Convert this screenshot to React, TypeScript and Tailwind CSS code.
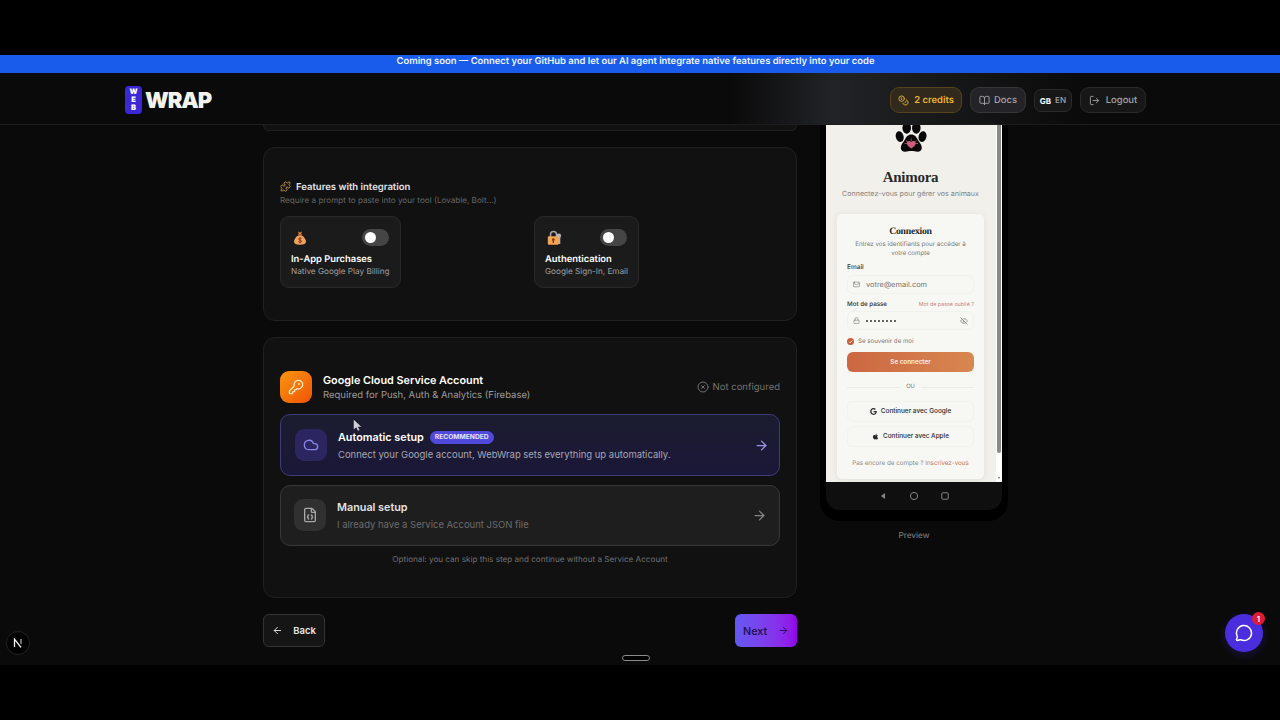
import React, { useState } from 'react';
import {
  ArrowLeft,
  ArrowRight,
  BookOpen,
  CircleX,
  Cloud,
  Coins,
  EyeOff,
  FileJson,
  KeyRound,
  Lock,
  LogOut,
  Mail,
  MessageCircle,
  Puzzle,
} from 'lucide-react';
import { FaApple, FaGoogle } from 'react-icons/fa';

interface FeatureCardProps {
  icon: React.ReactNode;
  title: string;
  description: string;
}

interface SetupOptionProps {
  icon: React.ReactNode;
  title: string;
  description: string;
  recommended?: boolean;
}

const MoneyBag = () => (
  <svg viewBox="0 0 16 16" className="w-4 h-4">
    <path d="M6 1.5 8 2.4l2-.9-.8 2.6H6.8z" fill="#e8833a" />
    <path d="M6.6 5.2C3.8 6.8 2 9.4 2 11.6 2 14 4 14.8 8 14.8s6-.8 6-3.200c0-2.200-1.800-4.800-4.600-6.400z" fill="#f0a35e" />
    <rect x="6" y="4" width="4" height="1.500" rx=".7" fill="#c4602a" />
    <path d="M9.700 8.500c-.8-.8-3.200-.7-3.200.6 0 1.400 3.200.8 3.200 2.200 0 1.300-2.500 1.400-3.400.5M8 7.300v6" stroke="#8a3b16" strokeWidth="1" fill="none" />
  </svg>
);

const LockWithKey = () => (
  <svg viewBox="0 0 16 16" className="w-4 h-4">
    <path d="M4.500 7V4.600a3 3 0 0 1 6 0V7" stroke="#a9a4a4" strokeWidth="1.500" fill="none" />
    <circle cx="12.800" cy="5.800" r="2.300" fill="#b9b4ba" />
    <path d="M11.800 7h2.500v7h-2.500z" fill="#c9a79a" />
    <rect x="1.800" y="6.200" width="10.800" height="8.600" rx="1.200" fill="#f2a455" />
    <circle cx="7.300" cy="9.600" r="1.300" fill="#7a2f14" />
    <path d="M6.700 10h1.300v3H6.700z" fill="#7a2f14" />
  </svg>
);

const Paw = () => (
  <svg viewBox="0 0 32 32" className="w-8 h-8">
    <g fill="#080808">
      <ellipse cx="11.700" cy="7" rx="4.300" ry="5.800" />
      <ellipse cx="21.300" cy="7" rx="4.300" ry="5.800" />
      <ellipse cx="4.700" cy="15.600" rx="3.900" ry="5.400" transform="rotate(-14 4.700 15.600)" />
      <ellipse cx="27.500" cy="15.600" rx="3.900" ry="5.400" transform="rotate(14 27.500 15.600)" />
      <path d="M16.300 13.500c-3.500 0-5 2.300-6.500 5.300-1.500 2.700-4 4.700-4 8 0 2.500 1.900 3.900 4.200 3.900 2.500 0 4-.6 6.300-.6s3.800.6 6.300.6c2.300 0 4.200-1.400 4.200-3.900 0-3.300-2.500-5.300-4-8-1.500-3-3-5.300-6.500-5.300z" />
    </g>
    <path d="M16.300 27.500c-2.600-1.700-4.400-3.400-4.400-5.300 0-2.400 3.200-3 4.400-.9 1.200-2.100 4.400-1.500 4.400.9 0 1.900-1.800 3.600-4.400 5.300z" fill="#cc5d7d" />
    <path d="M11 19.500l2.500 2M21.600 19.500l-2.500 2M16.300 17.500v3M9.500 22.500h3M23 22.500h-3" stroke="#cc5d7d" strokeWidth=".7" />
  </svg>
);

const FeatureCard: React.FC<FeatureCardProps> = ({ icon, title, description }) => {
  const [enabled, setEnabled] = useState(false);

  return (
    <div className="w-fit h-[72px] rounded-[9px] border border-[#292929] bg-[#1b1b1b] px-2.5 pt-3">
      <div className="flex items-center justify-between h-[17px] pl-[1px]">
        {icon}
        <button
          onClick={() => setEnabled(!enabled)}
          className={`flex items-center w-[27px] h-[17px] -ml-px mr-px rounded-full px-[3px] ${enabled ? 'justify-end bg-indigo-500' : 'bg-[#454545]'}`}
        >
          <span className="w-[11px] h-[11px] rounded-full bg-white" />
        </button>
      </div>
      <h4 className="mt-[7px] text-[9.400px] leading-[13px] font-semibold text-white whitespace-nowrap">{title}</h4>
      <p className="-mt-px text-[8.180px] leading-3 text-[#a0a0a0] whitespace-nowrap">{description}</p>
    </div>
  );
};

const SetupOption: React.FC<SetupOptionProps> = ({ icon, title, description, recommended = false }) => (
  <button
    className={`flex items-center w-full rounded-[10px] text-left ${
      recommended
        ? 'h-[62px] border-[1.500px] border-[#3f3a78] bg-linear-to-b from-[#1b1c2f] to-[#1b1738] pl-3.5 pr-2.5'
        : 'h-[61px] border border-[#373737] bg-[#1e1e1e] pl-[13px] pr-3 pb-px'
    }`}
  >
    <span
      className={`flex items-center justify-center w-8 h-8 rounded-[9px] shrink-0 ${
        recommended ? 'bg-[#2b265f] text-[#8985e8]' : 'bg-[#303030] text-[#a6a6a6]'
      }`}
    >
      {icon}
    </span>
    <span className="flex flex-col flex-1 ml-[11px] pt-0.5">
      <span className="flex items-center h-4">
        <span className={`text-[10.800px] leading-4 font-semibold ${recommended ? 'text-white' : 'text-[#e2e2e2]'}`}>{title}</span>
        {recommended && (
          <span className="flex items-center h-[13px] -mt-px ml-1.5 px-[5px] rounded-full bg-[#5148dc] text-[6.700px] font-bold text-[#e6e3ff]">
            RECOMMENDED
          </span>
        )}
      </span>
      <span className={`mt-0.5 text-[9.480px] leading-[14px] ${recommended ? 'text-[#a7a7b4]' : 'text-[#6c6c6c]'}`}>{description}</span>
    </span>
    <ArrowRight className={`w-[15px] h-[15px] ${recommended ? 'text-[#9a94e6]' : 'text-[#858585]'}`} />
  </button>
);

const Header = () => (
  <header className="flex items-center justify-between h-[52px] shrink-0 border-b border-[#1e1e1e] bg-linear-to-r from-[#0a0a0b] from-57% via-[#222326] via-65% to-[#0a0a0a] to-85% pt-[3px] pl-[125px] pr-[134px]">
    <div className="flex items-center gap-[3px]">
      <div className="flex flex-col items-center justify-center w-[17px] h-7 pb-px rounded-[4px] bg-[#3b27d6] text-[7.500px] leading-[8px] font-black text-white">
        <span>W</span>
        <span>E</span>
        <span>B</span>
      </div>
      <span className="mt-px text-[22px] leading-7 font-black tracking-[-1.100px] text-[#f3f2ea]">WRAP</span>
    </div>
    <nav className="flex items-center gap-2 text-[9.450px] leading-[14px] font-medium text-[#a3a3a3]">
      <div className="flex items-center justify-center gap-[5px] w-[72px] h-[26px] rounded-[9px] border border-[#54431c] bg-[#30291c] font-semibold text-[#e8b52c]">
        <Coins className="w-[11px] h-[11px]" />
        <span className="mt-0.5">2 credits</span>
      </div>
      <div className="flex items-center justify-center gap-1 w-14 h-[26px] rounded-[9px] border border-[#36363a] bg-[#242428]">
        <BookOpen className="w-[11px] h-[11px]" />
        <span className="mt-0.5">Docs</span>
      </div>
      <div className="flex items-center justify-center gap-1 w-[38px] h-[23px] rounded-[7px] border border-[#2a2a2a] bg-[#171717] text-[8.200px]">
        <span className="mt-px text-[8px] font-bold text-white">GB</span>
        EN
      </div>
      <div className="flex items-center justify-center gap-1.5 w-[66px] h-[26px] rounded-[9px] border border-[#2a2a2a] bg-[#171717]">
        <LogOut className="w-[11px] h-[11px]" />
        <span className="mt-0.5">Logout</span>
      </div>
    </nav>
  </header>
);

const FeaturesSection = () => (
  <section className="h-[174px] mt-4 rounded-xl border border-[#202020] bg-[#111111] px-4 pt-8">
    <div className="flex items-center gap-[5px] h-[13px] text-[9.520px] leading-[13px] font-semibold text-[#e4e4e4]">
      <Puzzle className="w-[11px] h-[11px] text-[#c99d32]" />
      <span className="mt-px">Features with integration</span>
    </div>
    <p className="text-[8.130px] leading-[14px] text-[#666666]">Require a prompt to paste into your tool (Lovable, Bolt...)</p>
    <div className="grid grid-cols-2 gap-2 mt-[9px]">
      <FeatureCard icon={<MoneyBag />} title="In-App Purchases" description="Native Google Play Billing" />
      <FeatureCard icon={<LockWithKey />} title="Authentication" description="Google Sign-In, Email" />
    </div>
  </section>
);

const ServiceAccountSection = () => (
  <section className="h-[261px] mt-4 rounded-xl border border-[#202020] bg-[#111111] px-4 pt-[33px]">
    <div className="flex items-center h-8">
      <div className="flex items-center justify-center w-8 h-8 rounded-[9px] bg-linear-to-br from-[#f99410] to-[#ee5207]">
        <KeyRound className="w-4 h-4 text-[#ffe9bd]" />
      </div>
      <div className="ml-[11px] pt-[2px] flex-1">
        <h3 className="text-[10.830px] leading-[15px] font-semibold text-white">Google Cloud Service Account</h3>
        <p className="text-[9.500px] leading-[15px] text-[#9c9c9c]">Required for Push, Auth &amp; Analytics (Firebase)</p>
      </div>
      <div className="flex items-center gap-1 text-[9.500px] leading-[14px] text-[#727272]">
        <CircleX className="w-3 h-3" />
        <span className="mt-0.5">Not configured</span>
      </div>
    </div>
    <div className="flex flex-col gap-[9px] mt-[11px]">
      <SetupOption
        recommended
        icon={<Cloud className="w-4 h-4" />}
        title="Automatic setup"
        description="Connect your Google account, WebWrap sets everything up automatically."
      />
      <SetupOption
        icon={<FileJson className="w-4 h-4" />}
        title="Manual setup"
        description="I already have a Service Account JSON file"
      />
    </div>
    <p className="mt-1.5 text-center text-[8.140px] leading-[14px] text-[#707070]">
      Optional: you can skip this step and continue without a Service Account
    </p>
  </section>
);

// Login page shown inside the device preview
const AppScreen = () => (
  <div className="flex h-[357px] bg-[#f1f0eb] font-['Inter',sans-serif] text-[#777570]">
    <div className="flex-1 flex flex-col items-center pl-[11px] pr-3 overflow-hidden">
      <div className="-mt-[4px]">
        <Paw />
      </div>
      <h1 className="mt-[15px] font-['Liberation_Serif',serif] text-[15px] leading-5 font-bold tracking-[-0.300px] text-[#292929]">Animora</h1>
      <p className="text-[7.100px] leading-3 whitespace-nowrap text-[#85837e]">Connectez-vous pour gérer vos animaux</p>
      <div className="flex flex-col w-[147px] h-[265px] mt-3.5 px-2.5 rounded-[5px] bg-[#f7f7f4] shadow-[0_1px_6px_rgba(120,110,90,0.12)]">
        <h2 className="mt-3 text-center font-['Liberation_Serif',serif] text-[9.800px] leading-[11px] font-bold tracking-[-0.300px] text-[#292929]">Connexion</h2>
        <p className="mt-[3px] text-center text-[6.200px] leading-[9px]">
          Entrez vos identifiants pour accéder à
          <br />
          votre compte
        </p>
        <label className="mt-1 text-[6.500px] leading-[10px] font-medium text-[#333333]">Email</label>
        <div className="flex items-center gap-1.5 h-[19px] mt-[3px] px-[5px] rounded-md border border-[#f1f1ee] text-[7.450px]">
          <Mail className="w-[7px] h-[7px]" />
          votre@email.com
        </div>
        <div className="flex items-center justify-between mt-1.5 h-2.5 text-[6.200px] font-medium text-[#333333]">
          <span>Mot de passe</span>
          <span className="text-[5.350px] font-normal text-[#cb8175]">Mot de passe oublié ?</span>
        </div>
        <div className="flex items-center gap-1.5 h-[19px] mt-[1px] px-[5px] rounded-md border border-[#f1f1ee]">
          <Lock className="w-[7px] h-[7px]" />
          <span className="flex flex-1 gap-[2px]">
            {Array.from({ length: 8 }).map((_, i) => (
              <span key={i} className="w-[2px] h-[2px] rounded-full bg-[#333333]" />
            ))}
          </span>
          <EyeOff className="w-[8px] h-[8px]" />
        </div>
        <div className="flex items-center gap-1 h-2.5 mt-1.5 text-[6.150px] leading-[8px]">
          <svg viewBox="0 0 8 8" className="w-[7px] h-[7px]">
            <circle cx="4" cy="4" r="4" fill="#c75d3b" />
            <path d="M2.200 4.200 3.500 5.500 6 2.800" stroke="#fff" strokeWidth=".9" fill="none" />
          </svg>
          <span className="mt-px">Se souvenir de moi</span>
        </div>
        <button className="w-full h-5 pt-[2px] mt-[6px] rounded-[6px] bg-linear-to-r from-[#cb6742] to-[#d88750] text-[6.300px] font-semibold text-[#fff0e5]">
          Se connecter
        </button>
        <div className="flex items-center gap-[6px] h-2 mt-[11px] text-[5.800px]">
          <span className="flex-1 h-px bg-[#ebebe7]" />
          OU
          <span className="flex-1 h-px bg-[#ebebe7]" />
        </div>
        <button className="flex items-center justify-center gap-1 w-full h-[21px] shrink-0 mt-2.5 rounded-md border border-[#f2f2ef] text-[6.450px] font-medium text-[#292929]">
          <FaGoogle className="w-[7px] h-[7px]" />
          Continuer avec Google
        </button>
        <button className="flex items-center justify-center gap-1 w-full h-[21px] shrink-0 mt-1 rounded-md border border-[#f2f2ef] text-[6.400px] font-medium text-[#292929]">
          <FaApple className="w-[7px] h-[7px]" />
          Continuer avec Apple
        </button>
        <p className="mt-[11px] text-center text-[6.250px] leading-[10px] whitespace-nowrap text-[#8e8c87]">
          Pas encore de compte ? <span className="text-[#c8745c]">Inscrivez-vous</span>
        </p>
      </div>
    </div>
    <div className="flex flex-col justify-between items-center w-[6px] bg-white">
      <div className="w-1 h-[328px] rounded-b-full bg-[#8b8b8b]" />
      <div className="mb-[3px] border-x-[1.500px] border-t-2 border-x-transparent border-t-[#666666]" />
    </div>
  </div>
);

const PhonePreview = () => (
  <aside className="flex flex-col items-center w-[188px]">
    <div className="w-full h-[396px] rounded-b-[20px] bg-black px-1.5">
      <AppScreen />
      <div className="flex items-center justify-center h-7 rounded-b-[14px] bg-[#0f0f0f]">
        <svg viewBox="0 0 70 10" className="w-[70px] h-2.5">
          <path d="M6 2v6L2 5z" fill="#858585" />
          <circle cx="35" cy="5" r="3.600" stroke="#858585" fill="none" />
          <rect x="62.800" y="1.800" width="6.400" height="6.400" rx=".8" stroke="#858585" fill="none" />
        </svg>
      </div>
    </div>
    <span className="mt-2 text-[8.200px] leading-3 font-medium text-[#777777]">Preview</span>
  </aside>
);

const App: React.FC = () => {
  return (
    <div className="w-[1280px] h-[720px] bg-black py-[55px] overflow-hidden font-['Inter',sans-serif] [text-rendering:geometricPrecision]">
      <div className="relative flex flex-col h-[610px] bg-[#0a0a0a] overflow-hidden">
        <div className="h-[18px] shrink-0 bg-[#195cec] pr-[9px] text-center text-[9.410px] leading-[13px] font-semibold text-[#edf4ff]">
          Coming soon — Connect your GitHub and let our AI agent integrate native features directly into your code
        </div>
        <Header />
        <main className="flex gap-[23px] pl-[263px]">
          <div className="w-[534px]">
            <div className="h-[6px] rounded-b-xl border border-t-0 border-[#202020] bg-[#111111]" />
            <FeaturesSection />
            <ServiceAccountSection />
            <div className="flex justify-between mt-4 h-[33px]">
              <button className="flex items-center justify-between w-[62px] rounded-[6px] border border-[#333333] bg-[#151515] pl-2 pr-2 text-[9.500px] leading-[14px] font-semibold text-[#e7e7e7]">
                <ArrowLeft className="w-[11px] h-[11px]" />
                <span className="mt-px">Back</span>
              </button>
              <button className="flex items-center justify-between w-[62px] rounded-[6px] bg-linear-to-r from-[#6358f2] to-[#9200e8] pl-2 pr-2 text-[10.800px] leading-4 font-medium text-[#1c0d45]">
                <span className="mt-0.5">Next</span>
                <ArrowRight className="w-[11px] h-[11px]" />
              </button>
            </div>
          </div>
          <PhonePreview />
        </main>

        {/* Floating controls */}
        <div className="absolute left-[622px] bottom-[4px] w-7 h-[6px] rounded-[3px] border border-[#8a8a8a] bg-black" />
        <div className="absolute left-[6px] bottom-[10px] flex items-center justify-center w-6 h-6 rounded-full border border-[#222222] bg-black">
          <svg viewBox="0 0 10 10" className="w-2.5 h-2.5" fill="none" stroke="#ffffff" strokeWidth="1.300">
            <path d="M1.500 9V1.200L8 9.300" />
            <path d="M8 1v5" stroke="#aaaaaa" />
          </svg>
        </div>
        <button className="absolute left-[1225px] bottom-[13px] flex items-center justify-center w-[38px] h-[38px] rounded-full bg-[#4a2ddd] shadow-[0_3px_8px_rgba(74,45,221,0.25)]">
          <MessageCircle className="w-[18px] h-[18px] text-white" />
          <span className="absolute -right-[2px] -top-[2px] flex items-center justify-center w-[13px] h-[13px] rounded-full bg-[#e01b35] text-[8px] font-semibold text-white">1</span>
        </button>
        <svg viewBox="0 0 12 16" className="absolute left-[353px] top-[364px] w-[9px] h-3">
          <path d="M1 1v13l3.300-3 2.400 4.500 2-1-2.300-4.300H11z" fill="#cfcfda" />
        </svg>
      </div>
    </div>
  );
};

export default App;
